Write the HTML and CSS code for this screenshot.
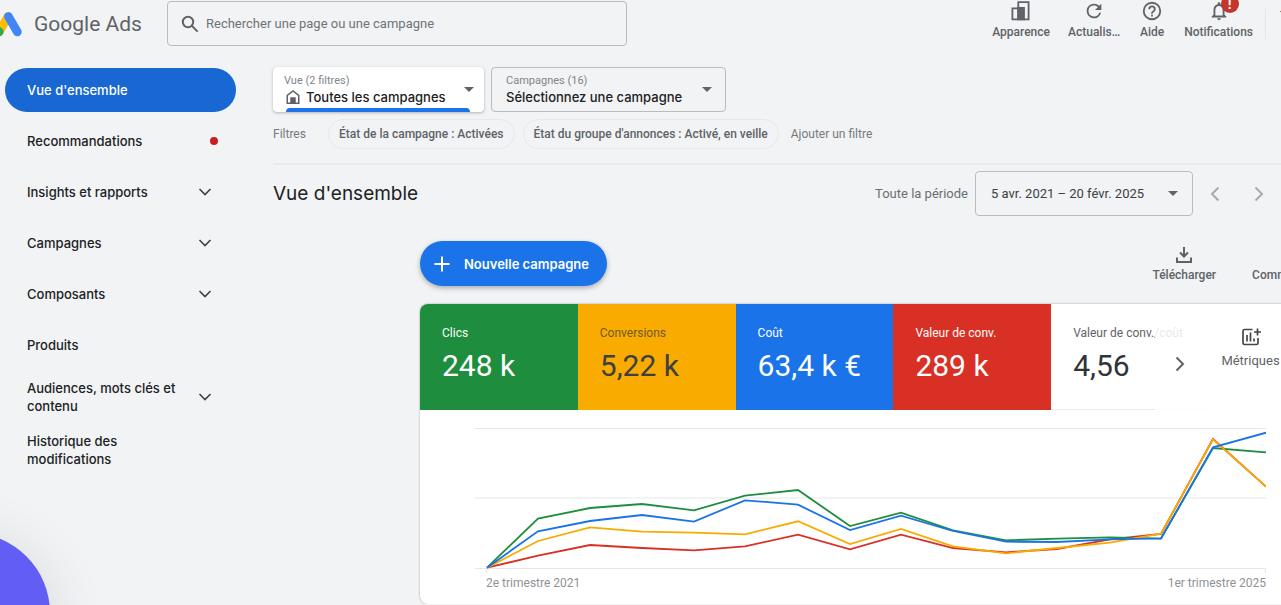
FILE: index.html
```html
<!DOCTYPE html>
<html lang="fr">
<head>
<meta charset="utf-8">
<meta name="viewport" content="width=device-width, initial-scale=1">
<title>Google Ads – Vue d'ensemble</title>
<link rel="stylesheet" href="styles.css">
</head>
<body>
<header class="topbar">
  <a class="brand" href="#">
    <svg class="brand-mark" width="22" height="28" viewBox="0 9 22 28" fill="none" stroke-width="8.6" stroke-linecap="round" aria-hidden="true">
      <path d="M8 15.5 -1 31" stroke="#fbbc04"/>
      <path d="M8.4 15.5 17.4 31" stroke="#4285f4"/>
      <circle cx="-1" cy="30.7" r="4.6" fill="#34a853"/>
    </svg>
    <span>Google Ads</span>
  </a>
  <label class="search">
    <svg width="20" height="20" viewBox="0 0 20 20" fill="none" stroke="#5f6368" stroke-width="2" aria-hidden="true"><circle cx="8" cy="8" r="5.2"/><path d="M11.8 11.8 17.6 17.6"/></svg>
    <input type="search" placeholder="Rechercher une page ou une campagne" aria-label="Rechercher une page ou une campagne">
  </label>
  <nav class="tools" aria-label="Outils">
    <button class="tool">
      <svg width="22" height="22" viewBox="0 0 22 22" fill="none" stroke="#5f6368" stroke-width="1.8" aria-hidden="true"><path d="M8.3 8V2.2h10.3v17.2H2.4V8.4h5.9"/><path d="M8 8h6v11.4H8z" fill="#5f6368"/></svg>
      <span>Apparence</span>
    </button>
    <button class="tool">
      <svg width="22" height="22" viewBox="0 0 24 24" fill="#5f6368" aria-hidden="true"><path d="M17.65 6.35A7.96 7.96 0 0 0 12 4a8 8 0 1 0 7.73 10h-2.08A6 6 0 1 1 12 6c1.66 0 3.14.69 4.22 1.78L13 11h7V4z"/></svg>
      <span>Actualis…</span>
    </button>
    <button class="tool">
      <svg width="22" height="22" viewBox="0 0 24 24" fill="#5f6368" aria-hidden="true"><path d="M11 18h2v-2h-2zm1-16a10 10 0 1 0 0 20 10 10 0 0 0 0-20m0 18a8 8 0 1 1 0-16 8 8 0 0 1 0 16m0-14a4 4 0 0 0-4 4h2a2 2 0 1 1 4 0c0 2-3 1.750-3 5h2c0-2.250 3-2.500 3-5a4 4 0 0 0-4-4"/></svg>
      <span>Aide</span>
    </button>
    <button class="tool">
      <svg width="22" height="22" viewBox="0 0 24 24" fill="#5f6368" aria-hidden="true"><path d="M12 22a2 2 0 0 0 2-2h-4a2 2 0 0 0 2 2m6-6v-5c0-3.070-1.630-5.640-4.500-6.320V4a1.500 1.500 0 0 0-3 0v.68C7.640 5.360 6 7.920 6 11v5l-2 2v1h16v-1zm-2 1H8v-6c0-2.480 1.510-4.500 4-4.500s4 2.020 4 4.500z"/></svg>
      <span>Notifications</span>
      <b class="alert">!</b>
    </button>
  </nav>
  <span class="account">1</span>
</header>

<div class="shell">
  <nav class="sidebar" aria-label="Navigation">
    <a class="item current" href="#" aria-current="page"><span>Vue d'ensemble</span></a>
    <a class="item" href="#"><span>Recommandations</span><i class="dot"></i></a>
    <a class="item" href="#"><span>Insights et rapports</span><svg class="chev" viewBox="0 0 14 14"><path d="M1.500 4 7 9.500 12.500 4"/></svg></a>
    <a class="item" href="#"><span>Campagnes</span><svg class="chev" viewBox="0 0 14 14"><path d="M1.500 4 7 9.500 12.500 4"/></svg></a>
    <a class="item" href="#"><span>Composants</span><svg class="chev" viewBox="0 0 14 14"><path d="M1.500 4 7 9.500 12.500 4"/></svg></a>
    <a class="item" href="#"><span>Produits</span></a>
    <a class="item" href="#"><span>Audiences, mots clés et contenu</span><svg class="chev" viewBox="0 0 14 14"><path d="M1.500 4 7 9.500 12.500 4"/></svg></a>
    <a class="item" href="#"><span>Historique des modifications</span></a>
  </nav>

  <main class="main">
    <div class="pickers">
      <div class="picker active">
        <div class="picker-body">
          <label for="view">Vue (2 filtres)</label>
          <div class="picker-value">
            <svg width="14" height="14" viewBox="0 0 14 14" fill="none" stroke="#5f6368" stroke-width="1.500" aria-hidden="true"><path d="M1.250 13.200V5.400L7 1l5.750 4.400v7.800z"/><path d="M5 8h4v5H5z" fill="#5f6368"/></svg>
            <select id="view"><option>Toutes les campagnes</option></select>
          </div>
        </div>
        <i class="caret"></i>
      </div>
      <div class="picker">
        <div class="picker-body">
          <label for="campaign">Campagnes (16)</label>
          <div class="picker-value">
            <select id="campaign"><option>Sélectionnez une campagne</option></select>
          </div>
        </div>
        <i class="caret"></i>
      </div>
    </div>

    <div class="filters">
      <span class="filters-label">Filtres</span>
      <button class="chip">État de la campagne : Activées</button>
      <button class="chip">État du groupe d'annonces : Activé, en veille</button>
      <button class="add-filter">Ajouter un filtre</button>
    </div>

    <div class="heading">
      <h1>Vue d'ensemble</h1>
      <label for="period">Toute la période</label>
      <div class="period">
        <select id="period"><option>5 avr. 2021 – 20 févr. 2025</option></select>
        <i class="caret"></i>
      </div>
      <button class="step" aria-label="Période précédente"><svg width="16" height="16" viewBox="0 0 16 16"><path d="M11.500 1.500 5 8l6.500 6.500"/></svg></button>
      <button class="step" aria-label="Période suivante"><svg width="16" height="16" viewBox="0 0 16 16"><path d="M4.500 1.500 11 8l-6.500 6.500"/></svg></button>
    </div>

    <section class="report">
      <div class="actions">
        <button class="new-campaign">
          <svg width="16" height="16" viewBox="0 0 16 16" stroke="#fff" stroke-width="2" aria-hidden="true"><path d="M8 .5v15M.5 8h15"/></svg>
          <span>Nouvelle campagne</span>
        </button>
        <button class="tool download">
          <svg width="18" height="18" viewBox="0 0 18 18" fill="none" stroke="#5f6368" stroke-width="2" aria-hidden="true"><path d="M9 1v9M5 6.500l4 4 4-4M2 11.500V16h14v-4.500"/></svg>
          <span>Télécharger</span>
        </button>
        <button class="tool">
          <svg width="18" height="18" viewBox="0 0 18 18" fill="none" stroke="#5f6368" stroke-width="2" aria-hidden="true"><path d="M1 17V1h16v12H5z"/></svg>
          <span>Commentaires</span>
        </button>
      </div>

      <div class="card">
        <div class="metrics">
          <button class="metric green"><span>Clics</span><strong>248 k</strong></button>
          <button class="metric yellow"><span>Conversions</span><strong>5,22 k</strong></button>
          <button class="metric blue"><span>Coût</span><strong>63,4 k €</strong></button>
          <button class="metric red"><span>Valeur de conv.</span><strong>289 k</strong></button>
          <div class="metric-last">
            <button class="metric plain"><span>Valeur de conv./coût</span><strong>4,56</strong></button>
            <button class="more" aria-label="Métriques suivantes"><svg width="16" height="16" viewBox="0 0 16 16"><path d="M4.500 1.500 11 8l-6.500 6.500"/></svg></button>
          </div>
          <button class="add-metric">
            <svg width="20" height="20" viewBox="0 0 20 20" fill="none" stroke="#444746" stroke-width="1.700" aria-hidden="true"><path d="M11.500 2.500h-8q-1.500 0-1.500 1.500v12q0 1.500 1.500 1.500h12q1.500 0 1.500-1.500v-5M6 8v6.500M9.500 5.500v9M13 11.500v3M16.500 1.500v7M13 5h7"/></svg>
            <span>Métriques</span>
          </button>
        </div>
        <div class="chart">
          <svg class="plot" viewBox="475 420 791 154" preserveAspectRatio="none" role="img" aria-label="Évolution par trimestre">
            <path class="grid" d="M475 428.500H1266M475 498H1266M475 568.500H1266M486.500 568V573M1265.500 568V573"/>
            <polyline stroke="#d93025" points="487,567.700 538,555.700 590,545 642,548 694,550.300 745,546.300 798,534.700 850,549.300 901,534.700 953,548 1006,552.300 1057,549 1110,539.300 1161,534 1213,439 1266,486.700"/>
            <polyline stroke="#1e8e3e" points="487,567.700 538,518.700 590,508 642,504 694,510.300 745,495.700 798,490 850,526 901,512.700 953,530.300 1006,540.300 1057,538.700 1110,537.300 1161,538.700 1213,448 1266,452.300"/>
            <polyline stroke="#f9ab00" points="487,567.700 538,541 590,527.300 642,531.700 694,532.700 745,534.300 798,521.300 850,544 901,529 953,546.300 1006,553.300 1057,548 1110,542.700 1161,533.700 1213,439.300 1266,486.700"/>
            <polyline stroke="#1a73e8" points="487,567.700 538,531.300 590,521 642,515 694,521.700 745,500.300 798,504.700 850,530 901,515.700 953,531 1006,541.700 1057,542 1110,539.300 1161,538.300 1213,447.300 1266,432.700"/>
          </svg>
          <div class="axis"><span>2e trimestre 2021</span><span>1er trimestre 2025</span></div>
        </div>
      </div>
    </section>
  </main>
</div>
<button class="bubble" aria-label="Assistance"></button>
</body>
</html>
```
FILE: styles.css
```css
* { box-sizing: border-box; }

body {
  margin: 0;
  min-height: 100vh;
  overflow: hidden;
  background: #f1f3f4;
  color: #202124;
  font-family: Roboto, "Liberation Sans", sans-serif;
  font-size: 12px;
}

button, select, input {
  margin: 0;
  padding: 0;
  border: 0;
  background: none;
  color: inherit;
  font: inherit;
}

select {
  appearance: none;
  min-width: 0;
  width: 100%;
}

a { color: inherit; text-decoration: none; }
svg { display: block; flex: none; }

/* Top bar */
.topbar {
  display: flex;
  height: 48px;
}

.brand {
  display: flex;
  flex: 0 0 167px;
  align-items: center;
  gap: 12px;
  color: #5f6368;
  font-size: 21px;
  white-space: nowrap;
}

.search {
  display: flex;
  flex: 0 1 460px;
  align-items: center;
  gap: 6px;
  height: 45px;
  margin-top: 1px;
  padding: 0 12px;
  border: 1px solid #babcbe;
  border-radius: 4px;
}

.search input { flex: 1; min-width: 0; outline: 0; font-size: 13px; }
.search input::placeholder { color: #6f7377; opacity: 1; }

.tools {
  display: flex;
  gap: 18px;
  margin-left: auto;
}

.tool {
  position: relative;
  display: flex;
  flex-direction: column;
  align-items: center;
  gap: 2px;
  min-width: 28px;
  color: #5f6368;
  font-size: 12px;
  font-weight: 500;
  line-height: 16px;
  white-space: nowrap;
}

.alert {
  position: absolute;
  top: -5px;
  left: 50%;
  width: 18px;
  height: 18px;
  margin-left: 2px;
  border-radius: 50%;
  background: #c5352b;
  color: #fff;
  font-size: 14px;
  line-height: 18px;
}

.account {
  width: 16px;
  height: 30px;
  margin: 9px 0 0 12px;
  padding-left: 13px;
  border-left: 1px solid #e3e5e7;
  overflow: hidden;
  color: #8a6d52;
  line-height: 12px;
}

/* Side navigation */
.shell {
  display: grid;
  grid-template-columns: 273px minmax(0, 1fr);
}

.sidebar {
  display: flex;
  flex-direction: column;
  gap: 7px;
  padding: 20px 37px 0 5px;
  font-family: Inter, "Open Sans", sans-serif;
  font-size: 13px;
  font-weight: 500;
  line-height: 18px;
}

.item {
  display: flex;
  align-items: center;
  justify-content: space-between;
  min-height: 44px;
  padding: 5px 24px 5px 22px;
  border-radius: 22px;
}

.item span { max-width: 156px; }
.item.current { background: #1967d2; color: #fff; }
.dot { width: 8px; height: 8px; margin-right: -6px; border-radius: 50%; background: #c5221f; }

.chev {
  width: 14px;
  height: 14px;
  fill: none;
  stroke: #3c4043;
  stroke-width: 1.6;
}

/* Campaign pickers */
.main { overflow: hidden; padding-top: 19px; margin-left: -4px; padding-left: 4px; }
.pickers { display: flex; gap: 7px; }

.picker {
  position: relative;
  display: flex;
  align-items: center;
  gap: 12px;
  width: 235px;
  height: 45px;
  padding: 0 13px 0 14px;
  border: 1px solid #babcbe;
  border-radius: 4px;
}

.picker.active {
  width: 211px;
  padding: 0 9px 0 10px;
  border-color: #fff;
  background: #fff;
  box-shadow: 0 1px 3px rgba(60, 64, 67, .35);
}

.picker.active::after {
  content: "";
  position: absolute;
  right: 13px;
  bottom: -1px;
  left: 12px;
  height: 4px;
  border-radius: 4px 4px 0 0;
  background: #1a73e8;
}

.picker-body { flex: 1; min-width: 0; }
.picker label { display: block; color: #80868b; font-size: 11px; line-height: 14px; }
.picker-value { display: flex; align-items: center; gap: 6px; padding-left: 2px; }
.picker:not(.active) .picker-value { padding-left: 0; }
.picker select {
  height: 18px;
  font-family: Inter, "Open Sans", sans-serif;
  font-size: 13px;
  font-weight: 500;
}

.caret {
  flex: none;
  border: 5px solid transparent;
  border-top-color: #5f6368;
  border-bottom: 0;
}

/* Filters */
.filters {
  display: flex;
  align-items: center;
  gap: 8px;
  margin-top: 7px;
  padding-bottom: 14px;
  border-bottom: 2px solid #e9ebec;
  color: #76797d;
}

.filters-label { width: 47px; }
.chip {
  height: 30px;
  padding: 0 10px;
  border: 1px solid #e6e8ea;
  border-radius: 15px;
  color: #5f6368;
  font-weight: 500;
  white-space: nowrap;
}
.add-filter { margin-left: 4px; }

/* Page heading */
.heading {
  display: flex;
  align-items: center;
  padding-top: 6px;
}

.heading h1 {
  margin: 0 auto 0 0;
  font-family: Inter, "Open Sans", sans-serif;
  font-size: 19px;
  font-weight: 400;
}

.heading label { color: #6b6f73; font-size: 13px; }
.period {
  display: flex;
  align-items: center;
  gap: 8px;
  width: 218px;
  height: 45px;
  margin: 0 6px 0 7px;
  padding: 0 14px 0 15px;
  border: 1px solid #babcbe;
  border-radius: 4px;
  color: #3c4043;
  font-size: 13px;
}

.step { padding: 8px; }
.step + .step { margin-left: 12px; margin-right: 6px; }
.step svg, .more svg { fill: none; stroke: #a8abae; stroke-width: 2; }

/* Report */
.report { padding: 25px 0 0 147px; margin-right: -15px; }
.actions { display: flex; height: 63px; margin-right: -35px; }

.new-campaign {
  display: flex;
  align-items: center;
  gap: 14px;
  height: 45px;
  padding: 0 18px 0 14px;
  border-radius: 23px;
  background: #1a73e8;
  box-shadow: 0 2px 5px rgba(60, 64, 67, .4);
  color: #fff;
  font-family: Inter, "Open Sans", sans-serif;
  font-size: 13px;
  font-weight: 600;
}

.actions .tool { align-self: flex-start; gap: 3px; padding-top: 5px; }
.download { margin: 0 36px 0 auto; }

.card {
  overflow: hidden;
  border-radius: 8px;
  background: #fff;
  box-shadow: 0 0 2px rgba(60, 64, 67, .5);
}

.metrics {
  display: grid;
  grid-template-columns: repeat(5, minmax(0, 1fr)) 87px;
  height: 106px;
}

.metric {
  display: flex;
  flex-direction: column;
  align-items: flex-start;
  justify-content: flex-start;
  gap: 8px;
  height: 100%;
  padding: 21px 0 0 22px;
  color: #fff;
  line-height: 16px;
  white-space: nowrap;
}

.metric strong { font-size: 30px; font-weight: 400; line-height: 34px; }
.green { background: #1e8e3e; }
.yellow { background: #f9ab00; color: #3c4043; }
.yellow span { color: #705a27; }
.blue { background: #1a73e8; }
.red { background: #d93025; }
.plain { width: 100%; border-bottom: 1px solid #e8eaed; color: #303438; }
.plain span { color: #5f6368; }
.metric-last { position: relative; }

.more {
  position: absolute;
  top: 0;
  right: 0;
  bottom: 0;
  display: flex;
  align-items: center;
  width: 54px;
  padding: 14px 0 0 17px;
  background: rgba(255, 255, 255, .85);
}
.more svg { stroke: #5f6368; }

.add-metric {
  display: flex;
  flex-direction: column;
  align-items: center;
  justify-content: flex-start;
  gap: 6px;
  padding: 23px 4px 0 0;
  color: #5f6368;
  font-size: 13px;
  line-height: 16px;
}

.chart { padding: 10px 30px 12px 55px; }
.plot { width: 100%; height: 154px; }
.plot polyline { fill: none; stroke-width: 1.8; vector-effect: non-scaling-stroke; }
.grid { fill: none; stroke: #e6e7e8; vector-effect: non-scaling-stroke; }
.axis {
  display: flex;
  justify-content: space-between;
  padding-left: 11px;
  color: #8f9296;
  font-size: 12px;
  line-height: 18px;
}

/* Floating assistance button */
.bubble {
  position: fixed;
  bottom: -88px;
  left: -110px;
  width: 160px;
  height: 160px;
  border-radius: 50%;
  background: #625df5;
  box-shadow: 0 8px 60px rgba(0, 0, 0, .12);
}
```
